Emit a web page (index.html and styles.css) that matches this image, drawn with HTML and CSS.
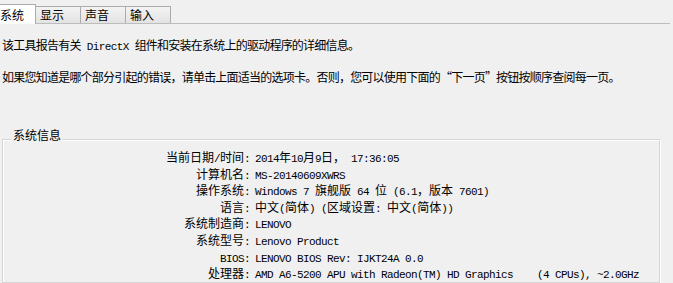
FILE: index.html
```html
<!DOCTYPE html>
<html lang="zh-CN">
<head>
  <meta charset="UTF-8" />
  <title>DirectX 诊断工具</title>
  <link rel="stylesheet" href="styles.css">
</head>
<body>

  <div class="tabs">
    <div class="tab active">系统</div>
    <div class="tab">显示</div>
    <div class="tab">声音</div>
    <div class="tab">输入</div>
  </div>

  <div class="panel">
    <p class="intro first">该工具报告有关<span class="en"> DirectX </span>组件和安装在系统上的驱动程序的详细信息。</p>
    <p class="intro">如果您知道是哪个部分引起的错误，请单击上面适当的选项卡。否则，您可以使用下面的“下一页”按钮按顺序查阅每一页。</p>

    <fieldset class="group">
      <legend>系统信息</legend>
      <div class="info">
        <div class="key">当前日期<span class="en">/</span>时间<span class="en">:</span></div>
        <div class="val"><span class="en">2014</span>年<span class="en">10</span>月<span class="en">9</span>日，<span class="en"> 17:36:05</span></div>

        <div class="key">计算机名<span class="en">:</span></div>
        <div class="val"><span class="en">MS-20140609XWRS</span></div>

        <div class="key">操作系统<span class="en">:</span></div>
        <div class="val"><span class="en">Windows 7 </span>旗舰版<span class="en"> 64 </span>位<span class="en"> (6.1</span>，版本<span class="en"> 7601)</span></div>

        <div class="key">语言<span class="en">:</span></div>
        <div class="val">中文<span class="en">(</span>简体<span class="en">) (</span>区域设置<span class="en">: </span>中文<span class="en">(</span>简体<span class="en">))</span></div>

        <div class="key">系统制造商<span class="en">:</span></div>
        <div class="val"><span class="en">LENOVO</span></div>

        <div class="key">系统型号<span class="en">:</span></div>
        <div class="val"><span class="en">Lenovo Product</span></div>

        <div class="key"><span class="en">BIOS:</span></div>
        <div class="val"><span class="en">LENOVO BIOS Rev: IJKT24A 0.0</span></div>

        <div class="key">处理器<span class="en">:</span></div>
        <div class="val"><span class="en">AMD A6-5200 APU with Radeon(TM) HD Graphics    (4 CPUs), ~2.0GHz</span></div>
      </div>
    </fieldset>
  </div>

</body>
</html>
```

FILE: styles.css
```css
body {
  margin: 0;
  background-color: #f0f0f0;
  color: #000;
  font-family: "Noto Sans CJK SC", sans-serif;
  font-size: 12px;
  overflow: hidden;
}
.en {
  font-family: "Liberation Mono", "Noto Sans CJK SC", monospace;
  font-size: 11px;
  letter-spacing: -0.6px;
  white-space: pre;
}
.tabs {
  display: flex;
  align-items: flex-end;
  height: 23px;
  width: 670px;
  border-bottom: 1px solid #bdbdbd;
}
.tab {
  box-sizing: border-box;
  width: 45px;
  height: 17px;
  padding-left: 4px;
  line-height: 16px;
  border: 1px solid #acacac;
  border-bottom: none;
  border-left: none;
  background: linear-gradient(#f3f3f3, #e3e3e3);
}
.tab.active {
  width: 40px;
  height: 20px;
  margin-left: -4px;
  margin-bottom: -1px;
  padding-left: 3px;
  line-height: 19px;
  background: #fff;
  border-left: 1px solid #acacac;
}
.panel {
  width: 658px;
  padding-left: 2px;
}
.intro {
  margin: 14px 0 0;
  line-height: 16px;
  letter-spacing: -0.77px;
}
.intro.first {
  margin-top: 13px;
}
.intro .en {
  letter-spacing: -0.6px;
}
.group {
  margin: 42px 0 0;
  padding: 0;
  border: 1px solid #d5d5d5;
  box-shadow: inset 1px 1px 0 #fff, 1px 1px 0 #fff;
}
.group legend {
  margin-left: 8px;
  padding: 0 2px 8px;
  line-height: 16px;
  background-color: #f0f0f0;
}
.info {
  display: grid;
  grid-template-columns: 247px 1fr;
  grid-auto-rows: 16.6px;
  column-gap: 5px;
  margin-top: -2px;
  line-height: 16.6px;
}
.key {
  text-align: right;
  white-space: nowrap;
}
.val {
  white-space: nowrap;
}
```
